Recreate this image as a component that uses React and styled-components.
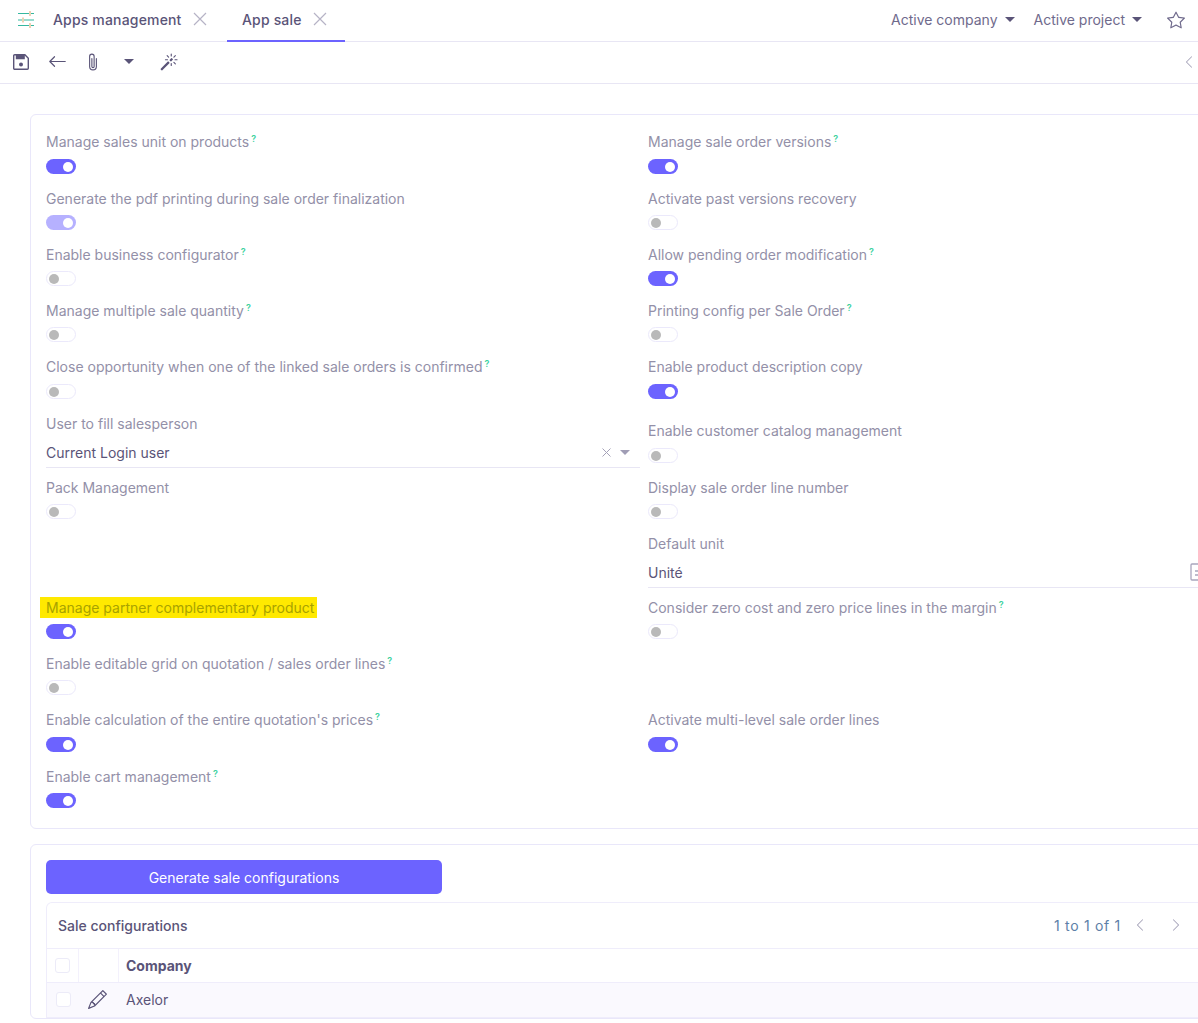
import React from "react";
import styled, { createGlobalStyle } from "styled-components";
import { BsArrowLeft, BsPaperclip, BsMagic, BsStar, BsPencil, BsChevronLeft, BsChevronRight } from "react-icons/bs";

const Global = createGlobalStyle`
  html, body { margin: 0; padding: 0; background: #fff; height: 100%; overflow: hidden; }
  body { font-family: Inter, "Noto Sans", sans-serif; font-size: 14px; color: #5a5478; }
  * { box-sizing: border-box; }
`;

const Page = styled.div`
  width: 1198px; height: 1023px; overflow: hidden; display: flex; flex-direction: column;
`;
const TopBar = styled.header`
  height: 42px; flex: none; display: flex; align-items: stretch; border-bottom: 1px solid #e8e6f4;
`;
const AppIcon = styled.div`
  width: 53px; flex: none; display: flex; align-items: center; padding-left: 17px; padding-bottom: 4px;
`;
const Tab = styled.div`
  display: flex; align-items: center; height: 42px; padding: 0 0 2px ${p => p.$pl || 0}px;
  width: ${p => p.$w}px; flex: none; gap: 11px; font-weight: 500; font-size: 14px; color: #5a5478;
  letter-spacing: 0.17px; white-space: nowrap;
  border-bottom: 2px solid ${p => p.$active ? "#6c63ff" : "transparent"};
`;
const Close = styled.svg`
  width: 14px; height: 14px; flex: none; stroke: #b6b3c6; stroke-width: 1.2; fill: none;
`;
const TopRight = styled.div`
  margin-left: auto; display: flex; align-items: center; padding: 0 13px 2px 0; color: #6f6a8c;
`;
const Drop = styled.span`
  display: inline-flex; align-items: center; gap: 7px; margin-right: ${p => p.$mr}px;
`;
const Caret = styled.span`
  display: inline-block; width: 0; height: 0; flex: none;
  border-left: 5px solid transparent; border-right: 5px solid transparent;
  border-top: 5px solid ${p => p.$c || "#5a5478"};
`;
const Toolbar = styled.div`
  height: 42px; flex: none; display: flex; align-items: center; border-bottom: 1px solid #e8e6f4;
  padding: 0 0 2px 12px; color: #5a5478;
`;
const ToolIcon = styled.span`
  display: inline-flex; align-items: center; justify-content: center; width: ${p => p.$w}px; font-size: ${p => p.$s || 18}px;
  margin-left: ${p => p.$ml || 0}px;
`;
const Collapse = styled.span`
  margin-left: auto; margin-right: 2px; color: #a5a2b8; display: inline-flex; font-size: 14px;
`;
const Content = styled.main`
  flex: 1; width: 1228px; margin-left: 30px; padding-top: 30px; display: flex; flex-direction: column; gap: 15px;
`;
const Card = styled.section`
  border: 1px solid #e9e7fa; border-radius: 6px; padding: ${p => p.$pad};
  background: #fff;
`;
const Grid = styled.div`
  display: grid; grid-template-columns: 594px 594px; column-gap: 8px; align-items: end;
`;
const Field = styled.div`
  height: ${p => p.$tall ? 64 : 56.25}px; display: flex; flex-direction: column; align-items: flex-start;
`;
const Label = styled.label`
  display: inline-block; line-height: 21px; height: 21px; color: ${p => p.$hl ? "#a8a200" : "#9390a8"};
  background: ${p => p.$hl ? "#ffe900" : "none"};
  padding: ${p => p.$hl ? "0 3px 0 6px" : 0}; margin-left: ${p => p.$hl ? -6 : 0}px;
  white-space: nowrap;
`;
const Help = styled.sup`
  color: #3ed2a0; font-size: 9px; font-weight: 600; margin-left: 2px; line-height: 0; vertical-align: 5px;
`;
const Switch = styled.span`
  position: relative; display: block; width: 30px; height: 15px; border-radius: 8px; margin-top: 6.25px;
  background: ${p => p.$on ? (p.$dim ? "#b6b1ff" : "#6c63ff") : "#fff"};
  border: 1px solid ${p => p.$on ? "transparent" : "#ebe9fb"};
  &::after {
    content: ""; position: absolute; top: 2px; width: 10px; height: 10px; border-radius: 50%;
    left: ${p => p.$on ? "16px" : "2px"}; background: ${p => p.$on ? "#fff" : "#b9b9b9"};
  }
`;
const Value = styled.div`
  width: 100%; height: 34px; display: flex; align-items: center; justify-content: space-between;
  border-bottom: 1px solid #e8e6f4; color: #5a5478; padding-top: 4px;
`;
const SelectTools = styled.span`
  display: inline-flex; align-items: center; gap: 9px; padding-right: 10px;
`;
const ClearIcon = styled.svg`
  width: 9px; height: 9px; stroke: #a5a2b8; stroke-width: 1; fill: none;
`;
const UnitIcon = styled.span`
  display: inline-flex; margin-right: 38px; margin-left: auto; color: #a9a6bd;
`;
const GenerateButton = styled.button`
  width: 396px; height: 34px; border: 0; border-radius: 5px; background: #6c63ff; color: #fff;
  font: 400 14px Inter, "Noto Sans", sans-serif; display: block; padding: 1px 0 0;
`;
const Panel = styled.div`
  margin-top: 8px; border: 1px solid #efedfb; border-bottom: 0; border-radius: 6px 6px 0 0; width: 1196px;
`;
const PanelHead = styled.div`
  height: 46px; display: flex; align-items: center; justify-content: space-between; padding: 0 47px 0 11px;
  border-bottom: 1px solid #efedfb; font-weight: 500; color: #5a5478;
`;
const Pager = styled.div`
  display: flex; align-items: center; font-weight: 400;
`;
const PagerText = styled.span`
  margin-right: 1px; color: #5d7fa8; letter-spacing: 0.7px;
`;
const PagerBtn = styled.span`
  display: inline-flex; justify-content: center; width: 36px; color: #a09db5; font-size: 14px;
`;
const Row = styled.div`
  height: ${p => p.$h}px; display: grid; grid-template-columns: 32px 40px 1fr; align-items: stretch;
  background: ${p => p.$alt ? "#faf9fe" : "#fff"}; border-bottom: 1px solid #efedfb;
`;
const Cell = styled.div`
  display: flex; align-items: center; font-weight: ${p => p.$b ? 700 : 400};
  padding-left: ${p => p.$pl || 0}px; justify-content: ${p => p.$c ? "center" : "flex-start"};
  padding-right: ${p => p.$pr || 0}px;
  border-right: ${p => p.$line ? "1px solid #f3f1fc" : "0"};
`;
const Check = styled.span`
  display: block; width: 15px; height: 15px; border: 1px solid #ecebf8; border-radius: 3px; background: #fff;
`;
const Slot = styled.div`
  grid-column: ${p => p.$col};
`;

const SlidersIcon = () => (
  <svg width="18" height="18" viewBox="0 0 18 18" fill="none" stroke="#35b8a0" strokeWidth="1">
    <path d="M1 3.5h11M14 3.5h3M1 10h4M7 10h10M1 15.5h11M14 15.5h3" />
    <path d="M13 1v5M6 7.5v5M13 13v5" stroke="#d9a36a" />
  </svg>
);
const SaveIcon = () => (
  <svg width="18" height="18" viewBox="0 0 18 18" fill="none" stroke="currentColor" strokeWidth="1.4">
    <path d="M1.7 2.8a1 1 0 0 1 1-1h10.2l3.4 3.4v10a1 1 0 0 1-1 1H2.7a1 1 0 0 1-1-1z" />
    <path d="M4.5 2v3.6h7.6V2" fill="currentColor" />
    <circle cx="9" cy="11.6" r="2" fill="currentColor" stroke="none" />
  </svg>
);
const UnitGlyph = () => (
  <svg width="14" height="18" viewBox="0 0 14 18" fill="none" stroke="currentColor" strokeWidth="1.3">
    <rect x="1" y="1" width="12" height="16" rx="1" />
    <path d="M5 8h7M5 12h7" />
  </svg>
);
const TabClose = () => (
  <Close viewBox="0 0 14 14"><path d="M1 1l12 12M13 1L1 13" /></Close>
);

const Toggle = ({ label, help, on, dim, hl }) => (
  <Field>
    <Label $hl={hl}>{label}{help ? <Help>?</Help> : null}</Label>
    <Switch $on={on} $dim={dim} />
  </Field>
);

const leftA = [
  ["Manage sales unit on products", 1, 1],
  ["Generate the pdf printing during sale order finalization", 0, 1, 1],
  ["Enable business configurator", 1, 0],
  ["Manage multiple sale quantity", 1, 0],
  ["Close opportunity when one of the linked sale orders is confirmed", 1, 0],
];
const rightA = [
  ["Manage sale order versions", 1, 1],
  ["Activate past versions recovery", 0, 0],
  ["Allow pending order modification", 1, 1],
  ["Printing config per Sale Order", 1, 0],
  ["Enable product description copy", 0, 1],
];

export default function App() {
  return (
    <Page>
      <Global />
      <TopBar>
        <AppIcon><SlidersIcon /></AppIcon>
        <Tab $w={174}>Apps management<TabClose /></Tab>
        <Tab $active $w={118} $pl={15}>App sale<TabClose /></Tab>
        <TopRight>
          <Drop $mr={19}>Active company<Caret /></Drop>
          <Drop $mr={25}>Active project<Caret /></Drop>
          <BsStar size={18} />
        </TopRight>
      </TopBar>
      <Toolbar>
        <ToolIcon $w={18}><SaveIcon /></ToolIcon>
        <ToolIcon $w={54} $s={19}><BsArrowLeft /></ToolIcon>
        <ToolIcon $w={18} $s={22}><BsPaperclip /></ToolIcon>
        <ToolIcon $w={54}><Caret /></ToolIcon>
        <ToolIcon $w={18} $s={18} $ml={4}><BsMagic /></ToolIcon>
        <Collapse><BsChevronLeft /></Collapse>
      </Toolbar>
      <Content>
        <Card $pad="16.25px 15px 6px">
          <Grid>
            {leftA.map((l, i) => (
              <React.Fragment key={l[0]}>
                <Toggle label={l[0]} help={l[1]} on={l[2]} dim={l[3]} />
                <Toggle label={rightA[i][0]} help={rightA[i][1]} on={rightA[i][2]} />
              </React.Fragment>
            ))}
            <Field $tall>
              <Label>User to fill salesperson</Label>
              <Value>Current Login user
                <SelectTools>
                  <ClearIcon viewBox="0 0 9 9"><path d="M0.5 0.5l8 8M8.5 0.5l-8 8" /></ClearIcon>
                  <Caret $c="#a09db5" />
                </SelectTools>
              </Value>
            </Field>
            <Toggle label="Enable customer catalog management" />
            <Toggle label="Pack Management" />
            <Toggle label="Display sale order line number" />
            <Slot $col="2">
              <Field $tall>
                <Label>Default unit</Label>
                <Value>Unité<UnitIcon><UnitGlyph /></UnitIcon></Value>
              </Field>
            </Slot>
            <Toggle label="Manage partner complementary product" on hl />
            <Toggle label="Consider zero cost and zero price lines in the margin" help />
            <Toggle label="Enable editable grid on quotation / sales order lines" help />
            <div />
            <Toggle label="Enable calculation of the entire quotation's prices" help on />
            <Toggle label="Activate multi-level sale order lines" on />
            <Toggle label="Enable cart management" help on />
          </Grid>
        </Card>
        <Card $pad="15px 15px 0">
          <GenerateButton>Generate sale configurations</GenerateButton>
          <Panel>
            <PanelHead>
              Sale configurations
              <Pager>
                <PagerText>1 to 1 of 1</PagerText>
                <PagerBtn><BsChevronLeft /></PagerBtn>
                <PagerBtn><BsChevronRight /></PagerBtn>
              </Pager>
            </PanelHead>
            <Row $h={34}>
              <Cell $c $line><Check /></Cell>
              <Cell $line />
              <Cell $b $pl={7}>Company</Cell>
            </Row>
            <Row $h={35} $alt>
              <Cell $c><Check /></Cell>
              <Cell $c $pr={4}><BsPencil size={19} /></Cell>
              <Cell $pl={7}>Axelor</Cell>
            </Row>
          </Panel>
        </Card>
      </Content>
    </Page>
  );
}
